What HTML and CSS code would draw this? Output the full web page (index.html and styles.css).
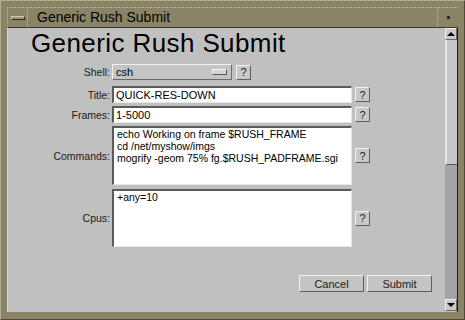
FILE: index.html
```html
<!DOCTYPE html>
<html lang="en">
<head>
    <meta charset="UTF-8">
    <title>Generic Rush Submit</title>
    <link rel="stylesheet" href="styles.css">
</head>
<body>
    <div class="window">
        <div class="titlebar">
            <div class="menu-btn"><span class="dash"></span></div>
            <div class="title">Generic Rush Submit</div>
            <div class="iconify-btn"><span class="dot"></span></div>
        </div>

        <div class="client">
            <div class="content">
                <h1>Generic Rush Submit</h1>

                <form class="form">
                    <div class="row row-shell">
                        <label class="label">Shell:</label>
                        <div class="select">
                            <span>csh</span>
                            <span class="select-mark"></span>
                        </div>
                        <button type="button" class="help">?</button>
                    </div>

                    <div class="row row-line">
                        <label class="label" for="title">Title:</label>
                        <input class="field" id="title" type="text" value="QUICK-RES-DOWN">
                        <button type="button" class="help">?</button>
                    </div>

                    <div class="row row-line">
                        <label class="label" for="frames">Frames:</label>
                        <input class="field" id="frames" type="text" value="1-5000">
                        <button type="button" class="help">?</button>
                    </div>

                    <div class="row row-commands">
                        <label class="label" for="commands">Commands:</label>
                        <textarea class="field area" id="commands" wrap="off">echo Working on frame $RUSH_FRAME
cd /net/myshow/imgs
mogrify -geom 75% fg.$RUSH_PADFRAME.sgi</textarea>
                        <button type="button" class="help">?</button>
                    </div>

                    <div class="row row-cpus">
                        <label class="label" for="cpus">Cpus:</label>
                        <textarea class="field area" id="cpus" wrap="off">+any=10</textarea>
                        <button type="button" class="help">?</button>
                    </div>

                    <div class="actions">
                        <button type="button" class="push">Cancel</button>
                        <button type="submit" class="push">Submit</button>
                    </div>
                </form>
            </div>

            <div class="scrollbar">
                <div class="sb-arrow"><span class="tri-up"></span></div>
                <div class="sb-thumb"></div>
                <div class="sb-trough"></div>
                <div class="sb-arrow sb-arrow-down"><span class="tri-down"></span></div>
            </div>
        </div>
    </div>
</body>
</html>
```

FILE: styles.css
```css
* {
    box-sizing: border-box;
}

body {
    margin: 0;
    background-color: #8a8466;
    font-family: "Liberation Sans", Arial, sans-serif;
}

.window {
    width: 465px;
    height: 320px;
    display: flex;
    flex-direction: column;
    padding: 6px 6px 7px 6px;
    background-color: #8a8466;
    border: 1px solid #b4ae90;
    border-right-color: #4e4a38;
    border-bottom-color: #4e4a38;
}

/* title bar */

.titlebar {
    height: 21px;
    display: flex;
    border-top: 1px dotted #c2bc9c;
    border-left: 1px dotted #c2bc9c;
    border-bottom: 1px solid #3e3a2a;
    background-color: #8a8466;
}

.menu-btn {
    width: 20px;
    display: flex;
    align-items: center;
    justify-content: center;
    border-right: 1px dotted #c2bc9c;
}

.dash {
    width: 14px;
    height: 4px;
    background-color: #9c9678;
    border: 1px solid #2e2b20;
    border-top-color: #d2ccb0;
    border-left-color: #d2ccb0;
}

.title {
    flex: 1;
    padding-left: 9px;
    font-size: 14px;
    line-height: 19px;
    color: #000000;
}

.iconify-btn {
    width: 21px;
    display: flex;
    align-items: center;
    justify-content: center;
    border-left: 1px dotted #c2bc9c;
}

.dot {
    width: 3px;
    height: 3px;
    background-color: #2a281e;
}

/* client area */

.client {
    flex: 1;
    display: flex;
    background-color: #c0c0c0;
    border-left: 1px solid #d8d8d8;
}

.content {
    flex: 1;
}

h1 {
    margin: 0 0 6px 23px;
    font-size: 26px;
    font-weight: normal;
    line-height: 30px;
    letter-spacing: 0.4px;
    color: #000000;
}

.form {
    display: flex;
    flex-direction: column;
    gap: 3px;
}

.row {
    display: flex;
    align-items: center;
}

.label {
    width: 104px;
    padding-right: 2px;
    text-align: right;
    font-size: 10.5px;
    color: #1a1a1a;
}

.row-shell {
    height: 16px;
    margin-bottom: 3px;
}

.row-line {
    height: 17px;
}

.row-commands {
    height: 59px;
}

.row-cpus {
    height: 58px;
    margin-top: 1px;
}

.select {
    width: 120px;
    height: 16px;
    display: flex;
    align-items: center;
    justify-content: space-between;
    padding: 0 4px 0 3px;
    font-size: 11px;
    background-color: #c4c4c4;
    border: 1px solid #f0f0f0;
    border-right-color: #6a6a6a;
    border-bottom-color: #6a6a6a;
}

.select-mark {
    width: 15px;
    height: 6px;
    background-color: #d4d4d4;
    border: 1px solid #f4f4f4;
    border-right-color: #5a5a5a;
    border-bottom-color: #5a5a5a;
}

.field {
    width: 240px;
    height: 100%;
    margin: 0;
    padding: 1px 2px;
    font-family: "Liberation Sans", Arial, sans-serif;
    font-size: 11px;
    color: #000000;
    background-color: #ffffff;
    border: 1px solid #e6e6e6;
    border-top: 2px solid #5a5a5a;
    border-left: 2px solid #5a5a5a;
    outline: none;
}

.area {
    resize: none;
    overflow: hidden;
    white-space: pre;
    font-size: 10.5px;
    line-height: 12px;
    padding: 0 3px;
}

.help {
    width: 15px;
    height: 15px;
    margin-left: 3px;
    padding: 0;
    font-family: "Liberation Sans", Arial, sans-serif;
    font-size: 11px;
    line-height: 12px;
    color: #222222;
    background-color: #c8c8c8;
    border: 1px solid #f2f2f2;
    border-right-color: #5e5e5e;
    border-bottom-color: #5e5e5e;
}

.row-shell .help {
    margin-left: 4px;
}

.actions {
    display: flex;
    justify-content: flex-end;
    gap: 3px;
    margin-top: 25px;
    padding-right: 13px;
}

.push {
    width: 65px;
    height: 17px;
    padding: 0;
    font-family: "Liberation Sans", Arial, sans-serif;
    font-size: 11px;
    color: #222222;
    background-color: #c4c4c4;
    border: 1px solid #f2f2f2;
    border-right-color: #5e5e5e;
    border-bottom-color: #5e5e5e;
}

/* scrollbar */

.scrollbar {
    width: 13px;
    display: flex;
    flex-direction: column;
    border-right: 1px solid #1c1c1c;
}

.sb-arrow {
    height: 12px;
    display: flex;
    align-items: center;
    justify-content: center;
    background-color: #cacaca;
    border: 1px solid #f0f0f0;
    border-right-color: #6a6a6a;
    border-bottom-color: #6a6a6a;
}

.sb-arrow-down {
    margin-bottom: 1px;
}

.tri-up {
    width: 0;
    height: 0;
    border-left: 4px solid transparent;
    border-right: 4px solid transparent;
    border-bottom: 4px solid #000000;
}

.tri-down {
    width: 0;
    height: 0;
    border-left: 4px solid transparent;
    border-right: 4px solid transparent;
    border-top: 4px solid #000000;
}

.sb-thumb {
    height: 125px;
    background-color: #c6c6c6;
    border-left: 2px solid #e4e4e4;
    border-bottom: 1px solid #5a5a5a;
}

.sb-trough {
    flex: 1;
    background-color: #a4a4a4;
}
```
